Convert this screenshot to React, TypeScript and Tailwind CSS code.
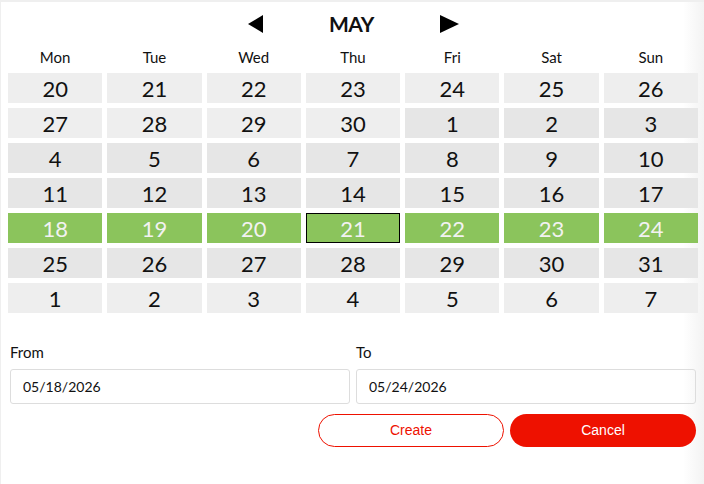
import React from 'react';

type Day = { n: number; muted: boolean };

const weekdays = ['Mon', 'Tue', 'Wed', 'Thu', 'Fri', 'Sat', 'Sun'];

function buildDays(): Day[] {
  const days: Day[] = [];
  for (let d = 20; d <= 30; d++) days.push({ n: d, muted: true });
  for (let d = 1; d <= 31; d++) days.push({ n: d, muted: false });
  for (let d = 1; d <= 7; d++) days.push({ n: d, muted: true });
  return days;
}

export default function App() {
  const days = buildDays();

  return (
    <div className="w-[704px] h-[484px] bg-[#efefef] pt-[2px] pl-px font-['Lato','Noto_Sans',sans-serif] text-[#111]">
      <div className="h-full bg-[linear-gradient(to_right,#ffffff_97%,#f3f3f3)] pl-[7px] pr-[6px]">
        <div className="flex items-center justify-center h-[42px] pt-[2px]">
          <button className="w-[15px] h-[18px] mr-[65px]">
            <svg viewBox="0 0 15 18" className="w-[15px] h-[18px]">
              <polygon points="15,0 15,18 0,9" fill="#000" />
            </svg>
          </button>
          <div className="text-[21px] font-bold tracking-tight w-[48px] text-center">MAY</div>
          <button className="w-[19px] h-[18px] ml-[64px]">
            <svg viewBox="0 0 19 18" className="w-[19px] h-[18px]">
              <polygon points="0,0 0,18 19,9" fill="#000" />
            </svg>
          </button>
        </div>

        <div className="grid grid-cols-7 gap-x-[5px] w-[690px]">
          {weekdays.map((w) => (
            <div key={w} className="text-center text-[15px] leading-[26px] h-[29px]">
              {w}
            </div>
          ))}
        </div>

        <div className="grid grid-cols-7 gap-x-[5px] gap-y-[5px] w-[690px]">
          {days.map((d, i) => {
            const selected = i >= 28 && i <= 34;
            const today = i === 31;
            let cls = d.muted ? 'bg-[#eeeeee]' : 'bg-[#e6e6e6]';
            if (selected) cls = 'bg-[#8bc45c] text-[#f2f2f2]';
            return (
              <div
                key={i}
                className={`h-[30px] flex items-center justify-center text-[22px] ${cls} ${
                  today ? 'border border-black' : ''
                }`}
              >
                {d.n}
              </div>
            );
          })}
        </div>

        <div className="grid grid-cols-2 gap-x-[6px] mt-[29px] pl-[2px] pr-[2px]">
          <div>
            <label className="block text-[15px] h-[25px] leading-[20px] mb-[2px]">From</label>
            <input
              readOnly
              value="05/18/2026"
              className="w-full h-[35px] border border-[#dddddd] rounded-[3px] px-[12px] text-[14px] font-['Lato',sans-serif] outline-none"
            />
          </div>
          <div>
            <label className="block text-[15px] h-[25px] leading-[20px] mb-[2px]">To</label>
            <input
              readOnly
              value="05/24/2026"
              className="w-full h-[35px] border border-[#dddddd] rounded-[3px] px-[12px] text-[14px] font-['Lato',sans-serif] outline-none"
            />
          </div>
        </div>

        <div className="flex justify-end gap-[6px] mt-[10px] pr-[2px]">
          <button className="w-[186px] h-[33px] rounded-full border border-[#ee1100] text-[#ee1100] bg-white text-[14px] font-['Liberation_Sans',Arial,sans-serif]">
            Create
          </button>
          <button className="w-[186px] h-[33px] rounded-full bg-[#ee1100] text-white text-[14px] font-['Liberation_Sans',Arial,sans-serif]">
            Cancel
          </button>
        </div>
      </div>
    </div>
  );
}
